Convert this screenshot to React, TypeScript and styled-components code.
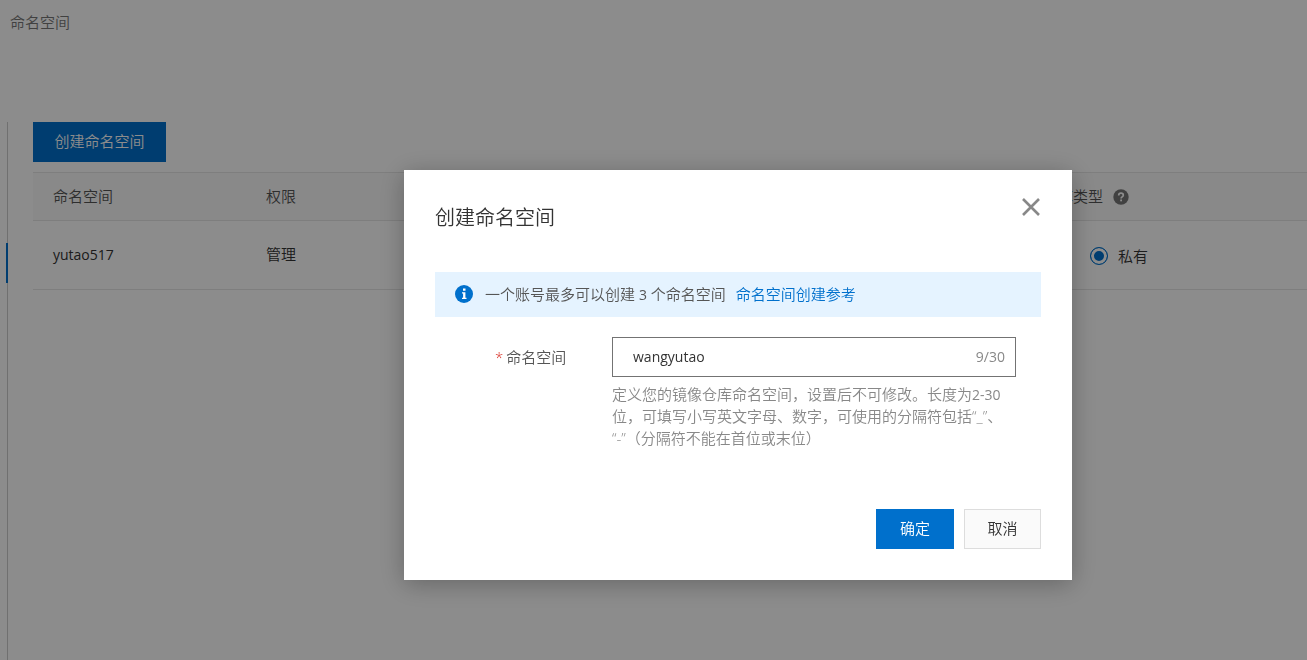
import React from "react";
import styled, { createGlobalStyle, css } from "styled-components";

const blue = "#0070cc";

const GlobalStyle = createGlobalStyle`
  *, *::before, *::after { box-sizing: border-box; }
  html, body, #root { height: 100%; }
  body {
    margin: 0;
    background: #fff;
    color: #333;
    font-family: "Open Sans", "Noto Sans CJK SC", sans-serif;
    font-size: 15px;
    font-weight: 350;
    line-height: 22px;
    text-spacing-trim: space-all;
  }
  button, input { font: inherit; }
`;

const Page = styled.div`
  min-height: 100%;
  display: flex;
  flex-direction: column;
  overflow: hidden;
`;

const Breadcrumb = styled.nav`
  padding: 11px 10px;
  color: #777;
`;

const Body = styled.div`
  flex: 1;
  display: flex;
  margin-top: 78px;
`;

const SideRail = styled.aside`
  width: 8px;
  flex: none;
  padding-top: 121px;
  border-right: 1px solid #ccc;
`;

const RailMarker = styled.div`
  width: 2px;
  height: 40px;
  margin-left: 6px;
  background: ${blue};
`;

const Content = styled.main`
  flex: 1;
  min-width: 0;
  padding-left: 25px;
`;

const Button = styled.button<{ $primary?: boolean; $wide?: boolean }>`
  height: 40px;
  min-width: ${(p) => (p.$wide ? 133 : p.$primary ? 78 : 77)}px;
  padding: 0 20px 2px;
  border: 1px solid #ddd;
  background: #fafafa;
  color: #333;
  cursor: pointer;
  ${(p) =>
    p.$primary &&
    css`
      border-color: ${blue};
      background: ${blue};
      color: #fff;
    `}
`;

const Table = styled.table`
  width: 100%;
  margin-top: 10px;
  border-collapse: collapse;
  table-layout: fixed;
  text-align: left;
`;

const HeadCell = styled.th<{ $width?: number }>`
  width: ${(p) => (p.$width ? `${p.$width}px` : "auto")};
  height: 48px;
  padding: 0 20px 2px;
  border: solid #e5e5e5;
  border-width: 1px 0;
  background: #fafafa;
  color: #555;
  font-weight: 350;
  white-space: nowrap;
`;

const Cell = styled.td`
  height: 69px;
  padding: 0 20px 2px;
  border-bottom: 1px solid #e5e5e5;
`;

const Latin = styled.span`
  font-size: 14px;
  font-weight: 400;
  line-height: 14px;
`;

const NoBreak = styled.span`
  white-space: nowrap;
`;

const Inline = styled.span`
  display: flex;
  align-items: center;
  gap: 10px;
  svg { margin-top: 2px; }
`;

const RadioGroup = styled.div`
  display: flex;
  gap: 19px;
  padding-top: 4px;
`;

const RadioLabel = styled.label`
  display: flex;
  align-items: center;
  gap: 10px;
`;

const Radio = styled.input`
  appearance: none;
  width: 18px;
  height: 18px;
  margin: 0;
  border: 1px solid #999;
  border-radius: 50%;
  &:checked {
    border-color: ${blue};
    background: ${blue};
    box-shadow: inset 0 0 0 3px #fff;
  }
`;

const Overlay = styled.div`
  position: fixed;
  inset: 0;
  display: flex;
  align-items: center;
  justify-content: center;
  padding: 90px 0 0 169px;
  background: rgba(0, 0, 0, 0.45);
`;

const Dialog = styled.section`
  width: 668px;
  max-width: 100%;
  padding: 31px;
  background: #fff;
  box-shadow: 0 4px 24px rgba(0, 0, 0, 0.28);
`;

const DialogHeader = styled.header`
  display: flex;
  align-items: flex-start;
  justify-content: space-between;
`;

const Title = styled.h2`
  margin: 0;
  font-size: 20px;
  font-weight: 350;
  line-height: 34px;
`;

const CloseButton = styled.button`
  display: flex;
  margin-top: -4px;
  padding: 0;
  border: 0;
  background: none;
  cursor: pointer;
`;

const Notice = styled.div`
  display: flex;
  align-items: center;
  height: 45px;
  margin-top: 37px;
  padding: 0 20px 1px;
  gap: 10px;
  background: #e5f3ff;
  color: #555;
  svg { margin-right: 2px; }
`;

const Link = styled.a`
  color: ${blue};
  text-decoration: none;
`;

const Field = styled.div`
  display: flex;
  margin-top: 20px;
  padding: 0 25px 0 60px;
`;

const FieldLabel = styled.label`
  width: 117px;
  flex: none;
  line-height: 40px;
  color: #555;
`;

const Required = styled.span`
  margin-right: 3px;
  color: #d93026;
`;

const Control = styled.div`
  flex: 1;
  min-width: 0;
`;

const InputBox = styled.div`
  display: flex;
  align-items: center;
  height: 40px;
  padding: 0 10px 0 20px;
  border: 1px solid #737373;
`;

const TextInput = styled.input`
  flex: 1;
  min-width: 0;
  padding: 0;
  border: 0;
  outline: 0;
  background: none;
  color: #333;
  font-size: 14px;
  font-weight: 400;
`;

const Counter = styled.span`
  color: #888;
  font-size: 14px;
  font-weight: 400;
`;

const Help = styled.p`
  margin: 6px 0 0;
  color: #888;
`;

const Footer = styled.footer`
  display: flex;
  justify-content: flex-end;
  gap: 10px;
  margin-top: 60px;
`;

const HelpIcon = () => (
  <svg width="16" height="16" viewBox="0 0 16 16" aria-hidden="true">
    <circle cx="8" cy="8" r="7.700" fill="#777" />
    <path d="M5.700 6.400C5.700 4.900 6.700 4.200 8 4.200s2.300.8 2.300 2c0 1.700-2.200 1.600-2.200 3.200" fill="none" stroke="#fff" strokeWidth="1.700" />
    <rect x="7.200" y="10.500" width="1.800" height="1.800" fill="#fff" />
  </svg>
);

const InfoIcon = () => (
  <svg width="18" height="18" viewBox="0 0 18 18" aria-hidden="true">
    <circle cx="9" cy="9" r="9" fill={blue} />
    <path d="M8 3.500h2.500v2.300H8zM7 7.300h3.400v5.400h1.100V14H7v-1.300h1.100V8.600H7z" fill="#fff" />
  </svg>
);

const CloseIcon = () => (
  <svg width="20" height="20" viewBox="0 0 20 20" aria-hidden="true">
    <path d="M2 2l16 16M18 2L2 18" stroke="#888" strokeWidth="2.600" />
  </svg>
);

export default function App() {
  return (
    <>
      <GlobalStyle />
      <Page lang="zh-CN">
        <Breadcrumb>命名空间</Breadcrumb>
        <Body>
          <SideRail>
            <RailMarker />
          </SideRail>
          <Content>
            <Button $primary $wide>创建命名空间</Button>
            <Table>
              <thead>
                <tr>
                  <HeadCell $width={213}>命名空间</HeadCell>
                  <HeadCell $width={747}>权限</HeadCell>
                  <HeadCell>
                    <Inline>默认仓库类型<HelpIcon /></Inline>
                  </HeadCell>
                </tr>
              </thead>
              <tbody>
                <tr>
                  <Cell><Latin>yutao517</Latin></Cell>
                  <Cell>管理</Cell>
                  <Cell>
                    <RadioGroup>
                      <RadioLabel><Radio type="radio" name="type" />公开</RadioLabel>
                      <RadioLabel><Radio type="radio" name="type" defaultChecked />私有</RadioLabel>
                    </RadioGroup>
                  </Cell>
                </tr>
              </tbody>
            </Table>
          </Content>
        </Body>
      </Page>
      <Overlay lang="zh-CN">
        <Dialog role="dialog" aria-modal="true" aria-labelledby="dialog-title">
          <DialogHeader>
            <Title id="dialog-title">创建命名空间</Title>
            <CloseButton aria-label="关闭"><CloseIcon /></CloseButton>
          </DialogHeader>
          <Notice>
            <InfoIcon />
            <span>一个账号最多可以创建 <Latin>3</Latin> 个命名空间</span>
            <Link href="#">命名空间创建参考</Link>
          </Notice>
          <Field>
            <FieldLabel htmlFor="namespace"><Required>*</Required>命名空间</FieldLabel>
            <Control>
              <InputBox>
                <TextInput id="namespace" defaultValue="wangyutao" maxLength={30} />
                <Counter>9/30</Counter>
              </InputBox>
              <Help>
                定义您的镜像仓库命名空间，设置后不可修改。长度为<Latin>2-30</Latin>位，可填写小写英文字母、数字，可使用的分隔符包括“_”、<wbr />
                <NoBreak>“-”（分</NoBreak>隔符不能在首位或末位）
              </Help>
            </Control>
          </Field>
          <Footer>
            <Button $primary>确定</Button>
            <Button>取消</Button>
          </Footer>
        </Dialog>
      </Overlay>
    </>
  );
}
